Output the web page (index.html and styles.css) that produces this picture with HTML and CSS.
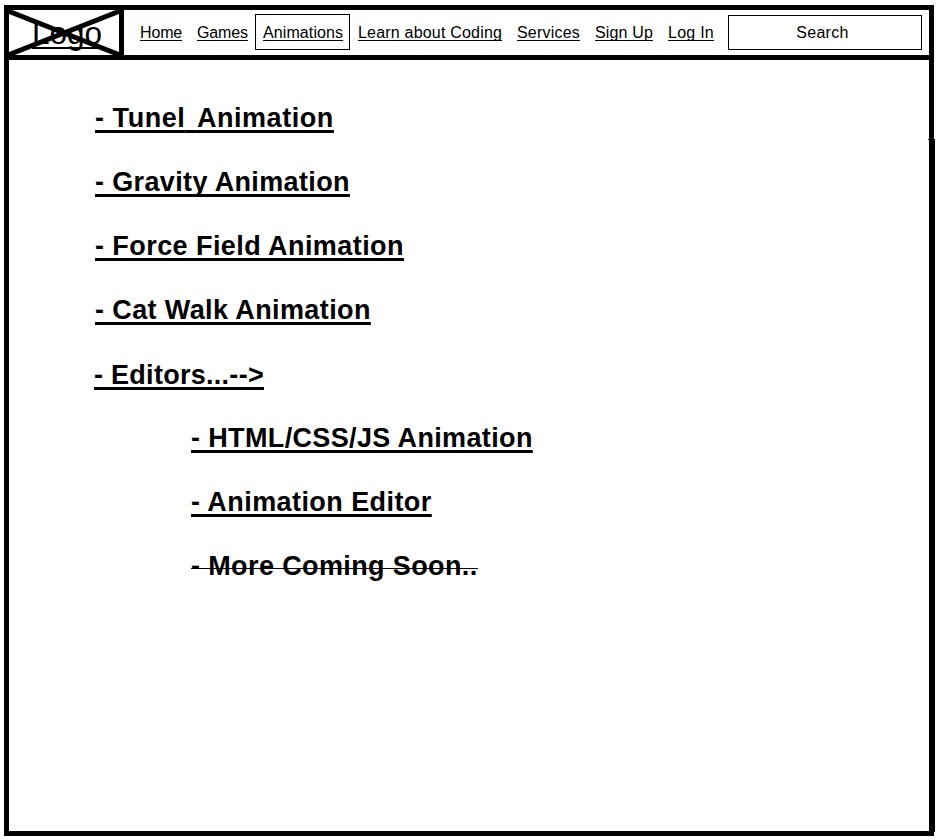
FILE: index.html
```html
<!DOCTYPE html>
<html lang="en">
<head>
<meta charset="utf-8">
<title>Animations</title>
<link rel="stylesheet" href="styles.css">
</head>
<body>
<div class="frame">
  <header class="header">
    <a class="logo" href="#">Logo
      <svg class="cross" viewBox="0 0 110 45" aria-hidden="true"><path d="M-1 1L111 45M-1 45L111 1"/></svg>
    </a>
    <nav class="nav">
      <a class="home" href="#">Home</a>
      <a class="home" href="#">Games</a>
      <a class="active" href="#">Animations</a>
      <a class="learn" href="#">Learn about Coding</a>
      <a class="services" href="#">Services</a>
      <a class="signup" href="#">Sign Up</a>
      <a class="login" href="#">Log In</a>
    </nav>
    <div class="search">Search</div>
  </header>
  <main class="content">
    <ul class="list">
      <li><a class="tunel" href="#">- Tunel<span class="gap"> </span>Animation</a></li>
      <li><a href="#">- Gravity Animation</a></li>
      <li><a class="force" href="#">- Force Field Animation</a></li>
      <li><a class="cat" href="#">- Cat Walk Animation</a></li>
      <li class="editors"><a class="more" href="#">- Editors...--&gt;</a>
        <ul class="sublist">
          <li><a href="#">- HTML/CSS/JS Animation</a></li>
          <li><a class="editor" href="#">- Animation Editor</a></li>
          <li><span class="soon">- More Coming Soon..</span></li>
        </ul>
      </li>
    </ul>
  </main>
</div>
<div class="rail"></div>
</body>
</html>
```
FILE: styles.css
```css
* { box-sizing: border-box; }
body {
  margin: 0;
  background: #fff;
  color: #000;
  font-family: "Liberation Sans", Arial, sans-serif;
}
a {
  color: inherit;
  text-decoration: underline;
  text-decoration-skip-ink: none;
}
.frame {
  width: 930px;
  height: 831px;
  margin: 5px 0 0 4px;
  border: 5px solid #000;
}
.header {
  display: flex;
  height: 50px;
  border-bottom: 5px solid #000;
}
.logo {
  position: relative;
  width: 115px;
  padding-left: 23px;
  border-right: 5px solid #000;
  font-size: 31.5px;
  line-height: 47px;
  text-decoration-thickness: 2px;
  text-underline-offset: 3px;
}
.cross {
  position: absolute;
  left: 0;
  top: 0;
  width: 110px;
  height: 45px;
}
.cross path {
  fill: none;
  stroke: #000;
  stroke-width: 5;
}
.nav {
  display: grid;
  grid-template-columns: 57px 58px 103px 159px 78px 73px 60px;
  padding-left: 16px;
  font-size: 16px;
  line-height: 46px;
  white-space: nowrap;
}
.nav a {
  justify-self: start;
  text-decoration-thickness: 1px;
  text-underline-offset: 2px;
}
.nav .home { letter-spacing: -0.15px; }
.nav .active {
  width: 95px;
  height: 36px;
  margin: 4px 0 0;
  padding: 0 6px 0 7px;
  border: 1px solid #000;
  line-height: 36px;
  letter-spacing: 0.1px;
}
.nav .learn { letter-spacing: 0.2px; }
.nav .services { letter-spacing: 0.2px; }
.nav .signup { letter-spacing: 0.15px; }
.nav .login { letter-spacing: 0.25px; }
.search {
  width: 194px;
  height: 35px;
  margin-top: 5px;
  padding-right: 5px;
  border: 1px solid #000;
  font-size: 16px;
  line-height: 33px;
  letter-spacing: 0.3px;
  text-align: center;
}
.content { padding: 26px 0 0 86px; }
.list, .sublist {
  margin: 0;
  padding: 0;
  list-style: none;
}
.list {
  font-size: 27px;
  font-weight: bold;
  line-height: 64px;
  letter-spacing: 0.36px;
}
.list a {
  text-decoration-thickness: 3px;
  text-underline-offset: 3px;
}
.tunel { letter-spacing: 0.55px; }
.gap { word-spacing: 3.5px; }
.force { letter-spacing: 0.43px; }
.cat { letter-spacing: 0.39px; }
.more { letter-spacing: 0.28px; }
.editors { margin: 1px 0 0 -1px; }
.sublist { margin: -1px 0 0 97px; }
.editor { letter-spacing: 0.43px; }
.soon {
  letter-spacing: 0.38px;
  background: linear-gradient(#000, #000) 0 17px / 100% 1px no-repeat;
}
.rail {
  position: absolute;
  left: 934px;
  top: 139px;
  width: 1px;
  height: 693px;
  background: #000;
}
.rail::before {
  content: "";
  position: absolute;
  left: -6px;
  top: 0;
  width: 6px;
  height: 1px;
  background: #000;
}
```
